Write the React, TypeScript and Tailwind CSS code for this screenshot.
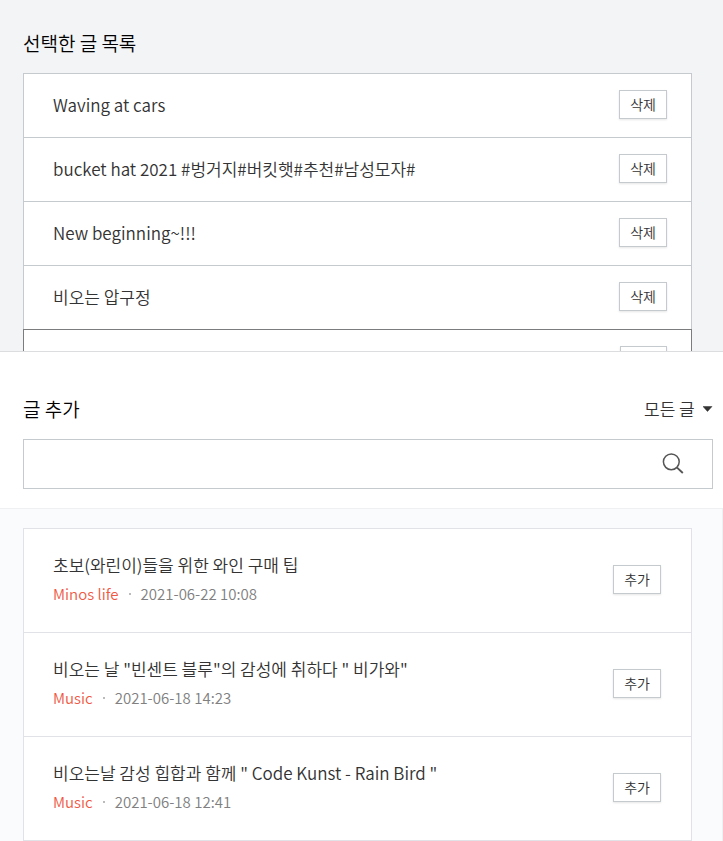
import React from "react";

const selectedPosts = [
  "Waving at cars",
  "bucket hat 2021 #벙거지#버킷햇#추천#남성모자#",
  "New beginning~!!!",
  "비오는 압구정",
];

const posts = [
  { title: "초보(와린이)들을 위한 와인 구매 팁", category: "Minos life", date: "2021-06-22 10:08" },
  { title: '비오는 날 "빈센트 블루"의 감성에 취하다 " 비가와"', category: "Music", date: "2021-06-18 14:23" },
  { title: '비오는날 감성 힙합과 함께 " Code Kunst - Rain Bird "', category: "Music", date: "2021-06-18 12:41" },
];

function ActionButton({ children, label }: { children?: React.ReactNode; label?: string }) {
  return (
    <button
      type="button"
      aria-label={label}
      className="h-[29px] min-w-[47px] shrink-0 border border-[#c5cacf] bg-white px-[10px] text-[14px] leading-[25px] text-[#333] shadow-[0_1px_2px_rgba(0,0,0,0.1)]"
    >
      {children}
    </button>
  );
}

export default function App() {
  return (
    <div className="flex h-screen flex-col overflow-hidden bg-white font-['Noto_Sans_CJK_KR',sans-serif] font-[350] text-[#333]">
      <section className="max-h-[352px] shrink-0 overflow-hidden border-b border-[#dcdddf] bg-[#f3f4f6] pt-7 pr-[31px] pl-[23px]">
        <h2 className="text-[19px] leading-[29px] text-black">선택한 글 목록</h2>
        <ul className="mt-4">
          {selectedPosts.map((title) => (
            <li
              key={title}
              className="-mb-px flex h-[65px] items-center justify-between border border-[#c5cacf] bg-white pr-6 pb-[2px] pl-[29px]"
            >
              <span className="text-[17px] leading-6">{title}</span>
              <ActionButton>삭제</ActionButton>
            </li>
          ))}
          <li className="relative -mt-px flex h-[65px] items-center justify-end border border-[#7b7c7e] bg-white pr-6 pb-[2px] pl-[29px]">
            <ActionButton label="삭제" />
          </li>
        </ul>
      </section>

      <section className="shrink-0 pt-[42px] pr-[10px] pb-[19px] pl-[23px]">
        <div className="flex items-center justify-between">
          <h2 className="text-[19px] leading-[29px] text-black">글 추가</h2>
          <div className="flex items-center gap-2">
            <select
              aria-label="글 분류"
              className="appearance-none bg-transparent text-[17px] leading-6 text-[#333]"
            >
              <option>모든 글</option>
            </select>
            <svg className="h-[6px] w-[10px]" viewBox="0 0 10 6" fill="#333" aria-hidden="true">
              <path d="M0 0.5h9L4.5 5.5z" stroke="#333" strokeWidth="0.5" strokeLinejoin="round" />
            </svg>
          </div>
        </div>
        <form className="mt-4 flex h-[50px] items-center border border-[#c5cacf] pr-7">
          <input
            type="text"
            aria-label="글 검색"
            className="h-full min-w-0 flex-1 bg-transparent px-4 text-[17px] outline-none"
          />
          <button type="button" aria-label="검색">
            <svg className="size-[22px]" viewBox="0 0 22 22" fill="none" stroke="#555" strokeWidth="1.5" aria-hidden="true">
              <circle cx="9.3" cy="8.8" r="7.9" />
              <path d="M14.8 14.4l6 5.6" strokeWidth="1.9" />
            </svg>
          </button>
        </form>
      </section>

      <section className="min-h-0 flex-1 overflow-hidden border-t border-r border-[#eff0f2] bg-[#fafbfd] pt-[19px] pr-[30px] pl-[23px]">
        <ul className="border border-[#e0e2e7] bg-white pb-10">
          {posts.map((post) => (
            <li
              key={post.title}
              className="flex h-[104px] items-center justify-between border-b border-[#e0e2e7] pr-[30px] pb-[2px] pl-[29px]"
            >
              <div>
                <p className="text-[17px] leading-7">{post.title}</p>
                <p className="flex items-center text-[15px] leading-[30px]">
                  <a href="#" className="text-[#ef5944]">{post.category}</a>
                  <span className="mx-[10px] size-[2px] bg-[#bbb]" />
                  <span className="text-[#808080]">{post.date}</span>
                </p>
              </div>
              <ActionButton>추가</ActionButton>
            </li>
          ))}
        </ul>
      </section>
    </div>
  );
}
